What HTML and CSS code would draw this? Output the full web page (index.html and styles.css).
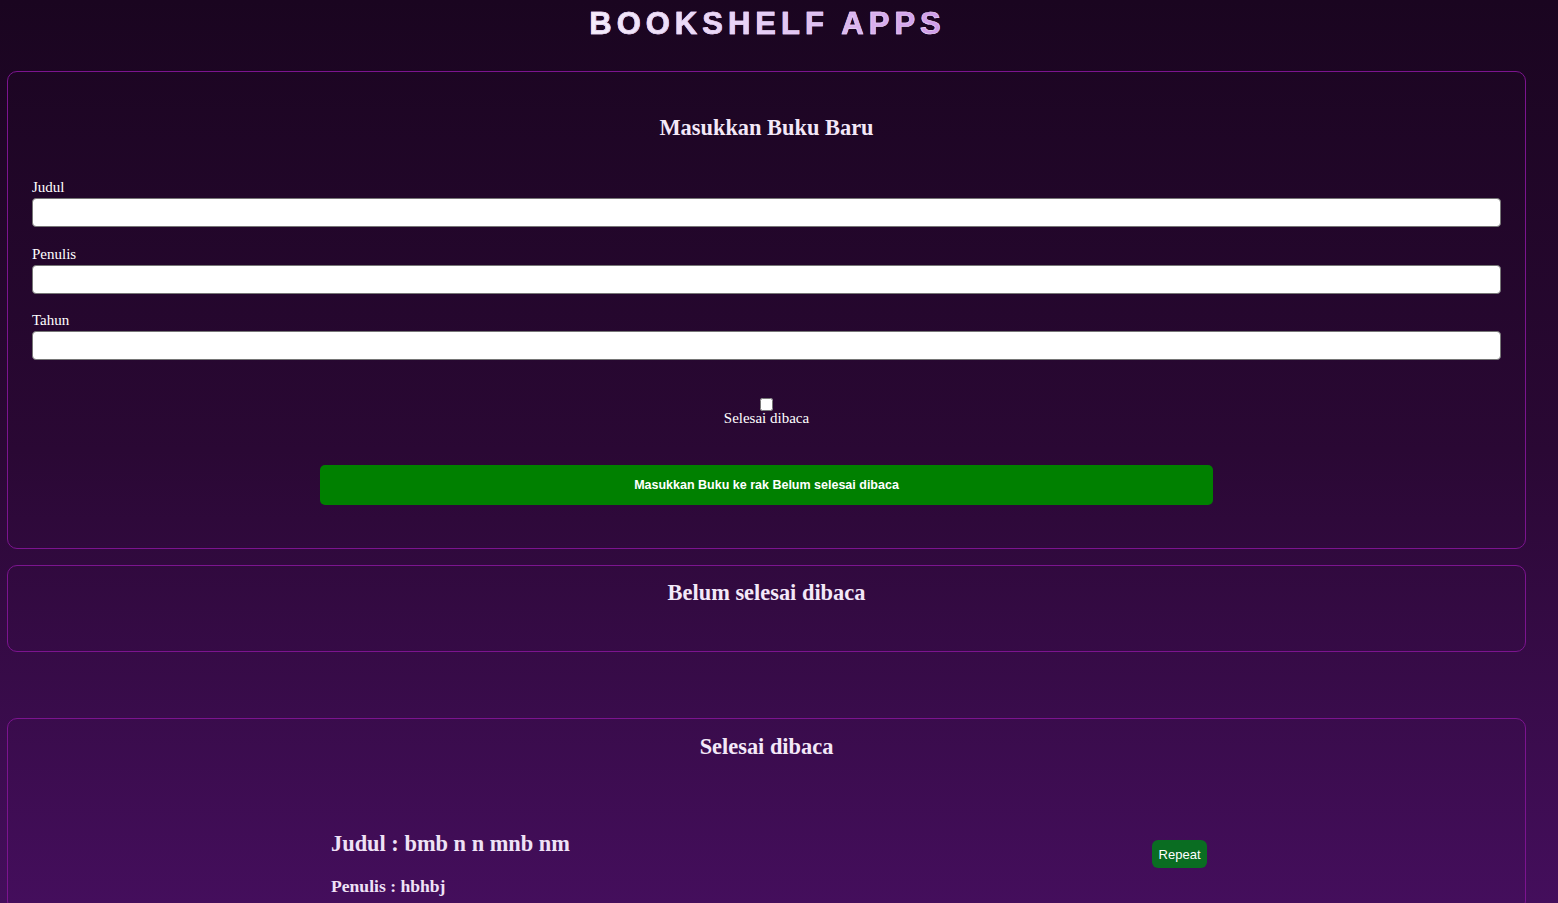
FILE: index.html
```html
<!DOCTYPE html>
<html lang="id">
<head>
<meta charset="utf-8">
<title>Bookshelf Apps</title>
<link rel="stylesheet" href="styles.css">
</head>
<body>
<div class="app">
  <header class="head">
    <h1 class="brand">BOOKSHELF APPS</h1>
  </header>
  <main class="shelves">
    <section class="card card-input">
      <h2 class="card-title">Masukkan Buku Baru</h2>
      <form class="book-form">
        <div class="field">
          <label class="field-label" for="title">Judul</label>
          <input class="field-input" id="title" type="text">
        </div>
        <div class="field">
          <label class="field-label" for="author">Penulis</label>
          <input class="field-input" id="author" type="text">
        </div>
        <div class="field">
          <label class="field-label" for="year">Tahun</label>
          <input class="field-input" id="year" type="number">
        </div>
        <div class="check">
          <input class="check-box" id="complete" type="checkbox">
          <label class="check-label" for="complete">Selesai dibaca</label>
        </div>
        <button class="submit" type="button">Masukkan Buku ke rak Belum selesai dibaca</button>
      </form>
    </section>

    <section class="card card-shelf card-unread">
      <h2 class="card-title">Belum selesai dibaca</h2>
      <div class="book-list"></div>
    </section>

    <section class="card card-shelf card-done">
      <h2 class="card-title">Selesai dibaca</h2>
      <div class="book-list">
        <article class="book">
          <div class="book-info">
            <h3 class="book-title">Judul : bmb n n mnb nm</h3>
            <p class="book-author">Penulis : hbhbj</p>
          </div>
          <button class="repeat" type="button">Repeat</button>
        </article>
      </div>
    </section>
  </main>
</div>
</body>
</html>
```

FILE: styles.css
```css
html, body {
  margin: 0;
  padding: 0;
}

body {
  min-height: 903px;
  background: linear-gradient(180deg, #1a0520 0px, #2a0834 450px, #440e5c 903px);
  font-family: "Liberation Serif", "Times New Roman", serif;
  color: #f2e6f7;
}

.app {
  width: 1519px;
  margin-left: 7px;
}

.head {
  padding-top: 7px;
  text-align: center;
}

.brand {
  margin: 0 0 0 -3px;
  display: inline-block;
  padding-left: 5px;
  font-family: "Liberation Sans", Arial, sans-serif;
  font-weight: 700;
  font-size: 31px;
  line-height: 34px;
  letter-spacing: 5px;
  -webkit-text-stroke: 0.6px #e9d6f6;
  background: linear-gradient(90deg, #f5eefb 0%, #e6cdf6 50%, #cf9ae9 100%);
  -webkit-background-clip: text;
  background-clip: text;
  color: transparent;
}

.shelves {
  margin-top: 30px;
  display: flex;
  flex-direction: column;
}

.card {
  border: 1px solid #7c148f;
  border-radius: 10px;
  box-sizing: border-box;
}

.card-title {
  margin: 0;
  text-align: center;
  font-size: 22.4px;
  line-height: 26px;
  font-weight: 700;
  color: #f3e8f8;
}

.card-input {
  padding: 43px 24px 43px;
}

.book-form {
  margin-top: 38px;
  display: flex;
  flex-direction: column;
}

.field {
  display: flex;
  flex-direction: column;
  margin-bottom: 18.5px;
}

.field:nth-child(3) {
  margin-bottom: 0;
}

.field-label {
  font-size: 15px;
  line-height: 17px;
  color: #ffffff;
  margin-bottom: 2px;
}

.field-input {
  height: 29px;
  box-sizing: border-box;
  margin: 0;
  border: 1px solid #767676;
  border-radius: 4px;
  background: #ffffff;
  padding: 2px 6px;
}

.check {
  margin-top: 38px;
  display: flex;
  flex-direction: column;
  align-items: center;
}

.check-box {
  width: 13px;
  height: 13px;
  margin: 0;
}

.check-label {
  margin-top: 0;
  font-size: 15px;
  line-height: 15px;
  color: #ffffff;
}

.submit {
  margin: 39px auto 0;
  width: 893px;
  height: 40px;
  border: none;
  border-radius: 5px;
  background: #008000;
  color: #ffffff;
  font-family: "Liberation Sans", Arial, sans-serif;
  font-weight: 700;
  font-size: 12.5px;
}

.card-shelf {
  padding: 14px 24px;
}

.card-unread {
  margin-top: 16px;
  margin-bottom: 66px;
}

.card-unread .book-list {
  min-height: 31px;
}

.card-done {
  padding-top: 15px;
}

.book-list {
  display: flex;
  flex-direction: column;
  align-items: center;
}

.book {
  margin-top: 71px;
  width: 893px;
  box-sizing: border-box;
  padding: 0 6px 0 11px;
  display: flex;
  justify-content: space-between;
  align-items: flex-start;
}

.book-title {
  margin: 0;
  font-size: 22.4px;
  line-height: 26px;
  font-weight: 700;
  color: #efe2f6;
}

.book-author {
  margin: 19px 0 0;
  font-size: 17.6px;
  line-height: 20px;
  font-weight: 700;
  color: #efe2f6;
}

.repeat {
  margin-top: 9px;
  height: 28px;
  padding: 0 6.5px;
  border: none;
  border-radius: 6px;
  background: #0a6d22;
  color: #ffffff;
  font-family: "Liberation Sans", Arial, sans-serif;
  font-size: 13px;
}
```
